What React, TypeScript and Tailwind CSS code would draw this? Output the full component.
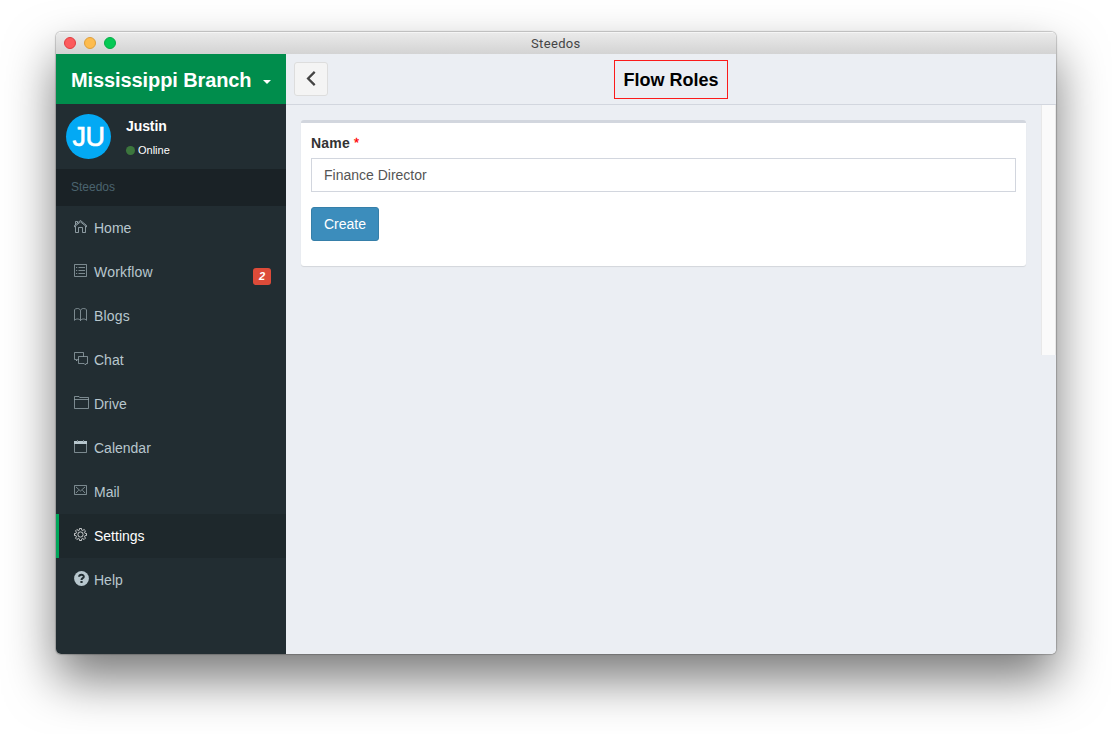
import React from "react";

const Svg = ({ children, w = 13 }: { children: React.ReactNode; w?: number }) => (
  <svg
    width={w}
    height={13}
    viewBox={`0 0 ${w} 13`}
    fill="none"
    stroke="currentColor"
    strokeWidth={0.6}
    className="block shrink-0"
  >
    {children}
  </svg>
);

const HomeIcon = () => (
  <Svg>
    <path strokeWidth="0.7" d="M0.3 5.6 6.5 0.5 12.7 5.6V6.9L6.5 1.9 0.3 6.9ZM1.5 4.6V1.5H3.5V3" />
    <path strokeWidth="0.7" d="M1.5 6.2V12.5H4.5V7.5H8.5V12.5H11.5V6.2" />
  </Svg>
);

const ListIcon = () => (
  <Svg>
    <path d="M0.5 0.5H12.5V12.5H0.5Z M4.5 3.5H11M4.5 6.5H11M4.5 9.5H11M2 3.5H3.2M2 6.5H3.2M2 9.5H3.2" />
  </Svg>
);

const BookIcon = () => (
  <Svg>
    <path d="M6.5 2.2C5.6 .9 4.7.5 3.4.5 2 .5 1.2 1 .5 1.7V12.4C1.3 11.4 2.2 11 3.4 11 4.7 11 5.7 11.4 6.5 12.5 7.3 11.4 8.3 11 9.6 11 10.8 11 11.7 11.4 12.5 12.4V1.7C11.8 1 11 .5 9.6.5 8.3.5 7.4.9 6.5 2.2ZM6.5 2.2V12.5" />
  </Svg>
);

const ChatIcon = () => (
  <Svg w={14}>
    <path d="M4.5 7.5H3.5L2.5 9V7.5H0.5V0.5H9.5V4.5M4.5 4.5H13.5V11.5H12.1L11.5 13 10.2 11.5H4.5Z" />
  </Svg>
);

const FolderIcon = () => (
  <Svg w={15}>
    <path d="M0.5 12.5V0.5H5L5.7 1.5H14.5V12.5ZM0.5 3.5H14.5" />
  </Svg>
);

const CalendarIcon = () => (
  <Svg>
    <path d="M0.5 3.5H12.5V12.5H0.5Z" />
    <path d="M0 1H3L3.5 2 4 1H9L9.5 2 10 1H13V4H0Z" fill="currentColor" stroke="none" />
    <path d="M3.5 0V1.5M9.5 0V1.5" />
  </Svg>
);

const MailIcon = () => (
  <Svg>
    <path d="M0.5 1.5H12.5V10.5H0.5ZM1.9 2.9 6.5 7 11.1 2.9M1.9 9.1 4.6 6.2M11.1 9.1 8.4 6.2" />
  </Svg>
);

const GearIcon = () => (
  <Svg>
    <path
      strokeWidth="0.75"
      d="M5.5.5H7.5L7.8 2.2 8.6 2.6 10.1 1.5 11.5 2.9 10.4 4.4 10.8 5.2 12.5 5.5V7.5L10.8 7.8 10.4 8.6 11.5 10.1 10.1 11.5 8.6 10.4 7.8 10.8 7.5 12.5H5.5L5.2 10.8 4.4 10.4 2.9 11.5 1.5 10.1 2.6 8.6 2.2 7.8.5 7.5V5.5L2.2 5.2 2.6 4.4 1.5 2.9 2.9 1.5 4.4 2.6 5.2 2.2Z"
    />
    <circle cx="6.5" cy="6.5" r="2.6" strokeWidth="0.75" />
  </Svg>
);

const HelpIcon = () => (
  <svg width="15" height="15" viewBox="0 0 15 15" className="block shrink-0">
    <circle cx="7.5" cy="7.5" r="7.4" fill="currentColor" />
    <path d="M5.1 5.7C5.2 3.2 9.8 3.1 9.8 5.7 9.8 7.2 7.5 7.2 7.5 8.9" fill="none" stroke="#222d32" strokeWidth="2" />
    <path d="M6.4 10H8.6V12H6.4Z" fill="#222d32" />
  </svg>
);

const items = [
  { label: "Home", Icon: HomeIcon },
  { label: "Workflow", Icon: ListIcon, badge: "2", wide: true },
  { label: "Blogs", Icon: BookIcon, wide: true },
  { label: "Chat", Icon: ChatIcon },
  { label: "Drive", Icon: FolderIcon },
  { label: "Calendar", Icon: CalendarIcon },
  { label: "Mail", Icon: MailIcon },
  { label: "Settings", Icon: GearIcon, active: true },
  { label: "Help", Icon: HelpIcon },
];

function Sidebar() {
  return (
    <aside className="flex w-[230px] shrink-0 flex-col bg-[#222d32]">
      <div className="flex h-[50px] items-center bg-[#008d4c] pl-[15px] pt-[2px] text-white">
        <span className="w-[181px] whitespace-nowrap text-[20px] font-bold tracking-[-0.1px]">Mississippi Branch</span>
        <svg width="8" height="4" viewBox="0 0 8 4" className="ml-[11px] mt-[3px]">
          <path d="M0 0H8L4 4Z" fill="white" />
        </svg>
      </div>
      <div className="flex h-[65px] px-[10px] pt-[10px] text-white">
        <div className="flex size-[45px] items-center justify-center rounded-full bg-[#03a9f4] pt-px text-[27px] tracking-[-0.5px] [-webkit-text-stroke:0.6px_white]">
          JU
        </div>
        <div className="ml-[15px] flex flex-col pt-[2px]">
          <span className="text-[14px] font-bold leading-5 tracking-[-0.1px]">Justin</span>
          <span className="mt-[6px] flex items-center text-[11px] leading-4">
            <span className="mr-[3px] size-[9px] rounded-full bg-[#3c763d]" />
            Online
          </span>
        </div>
      </div>
      <div className="flex h-[37px] items-center bg-[#1a2226] pb-[2px] pl-[15px] text-[12px] text-[#4b646f]">Steedos</div>
      <nav>
        {items.map(({ label, Icon, badge, active, wide }) => (
          <div
            key={label}
            className={
              active
                ? "flex h-[44px] items-center border-l-[3px] border-[#00a65a] bg-[#1e282c] pl-[15px] pr-[15px] text-white"
                : "flex h-[44px] items-center border-l-[3px] border-transparent pl-[15px] pr-[15px] text-[#b8c7ce]"
            }
          >
            <span className="-mt-[3px] w-5">
              <Icon />
            </span>
            <span className={wide ? "text-[14px] leading-5 tracking-[0.2px]" : "text-[14px] leading-5"}>{label}</span>
            {badge && (
              <span className="ml-auto mt-[9px] flex h-[17px] w-[18px] items-center justify-center rounded-[3px] bg-[#dd4b39] text-[11px] font-bold italic leading-none text-white">
                {badge}
              </span>
            )}
          </div>
        ))}
      </nav>
    </aside>
  );
}

function Content() {
  return (
    <main className="flex min-w-0 flex-1 flex-col bg-[#ebeef3]">
      <header className="flex h-[51px] shrink-0 items-start border-b border-[#d2d6de] pl-2">
        <button className="mt-2 flex size-[34px] items-center justify-center rounded-[3px] border border-[#dddddd] bg-[#f4f4f4]">
          <svg width="10" height="15" viewBox="0 0 10 15" className="mb-[2px]">
            <path d="M8.7 0.9 2.1 7.5 8.7 14.1" fill="none" stroke="#444444" strokeWidth="2.3" />
          </svg>
        </button>
        <h1 className="ml-[286px] mt-[6px] flex h-[39px] w-[114px] items-center justify-center whitespace-nowrap border border-[#fb1a1a] pt-[2px] text-[18px] font-bold text-black">
          Flow Roles
        </h1>
      </header>
      <div className="flex flex-1 items-start">
        <section className="ml-[15px] mt-[15px] h-[146px] w-[725px] rounded-[3px] border-t-[3px] border-[#d2d6de] bg-white px-[10px] pt-[10px] shadow-[0_1px_1px_rgba(0,0,0,0.1)]">
          <label className="flex gap-1 text-[14px] font-bold leading-5 text-[#333333]">
            <span className="tracking-[0.2px]">Name</span>
            <span className="text-[13px] font-normal text-[#ff0000] [-webkit-text-stroke:0.3px_#ff0000]">*</span>
          </label>
          <div className="mt-[5px] flex h-[34px] items-center border border-[#d2d6de] bg-white px-3 text-[14px] text-[#555555]">
            Finance Director
          </div>
          <button className="mt-[15px] h-[34px] w-[68px] rounded-[3px] border border-[#367fa9] bg-[#3c8dbc] text-[14px] text-white">
            Create
          </button>
        </section>
        <div className="ml-auto h-[250px] w-[15px] border-x border-[#e8e8e8] bg-[#fafafa]" />
      </div>
    </main>
  );
}

export default function App() {
  return (
    <div className="h-[734px] w-[1112px] overflow-hidden bg-white px-14 pt-8 font-['Liberation_Sans',Arial,sans-serif]">
      <div className="h-[622px] w-[1000px] rounded-[5px] shadow-[0_0_1px_1px_rgba(0,0,0,0.2),0_25px_50px_rgba(0,0,0,0.53)]">
        <div className="flex h-full flex-col overflow-hidden rounded-[5px]">
          <div className="flex h-[22px] shrink-0 items-center border-t border-[#f5f5f5] bg-linear-to-b from-[#eaeaea] to-[#d3d3d3] pb-[1px]">
            <div className="flex w-[475px] gap-2 pl-2">
              <span className="size-3 rounded-full border border-[#df3d40] bg-[#fc5b5d]" />
              <span className="size-3 rounded-full border border-[#de9f3c] bg-[#fdbc4f]" />
              <span className="size-3 rounded-full border border-[#06ac47] bg-[#05c955]" />
            </div>
            <span className="pt-[2px] font-[Roboto,sans-serif] text-[13px] leading-5 tracking-[0.35px] text-[#454545]">Steedos</span>
          </div>
          <div className="flex flex-1">
            <Sidebar />
            <Content />
          </div>
        </div>
      </div>
    </div>
  );
}
